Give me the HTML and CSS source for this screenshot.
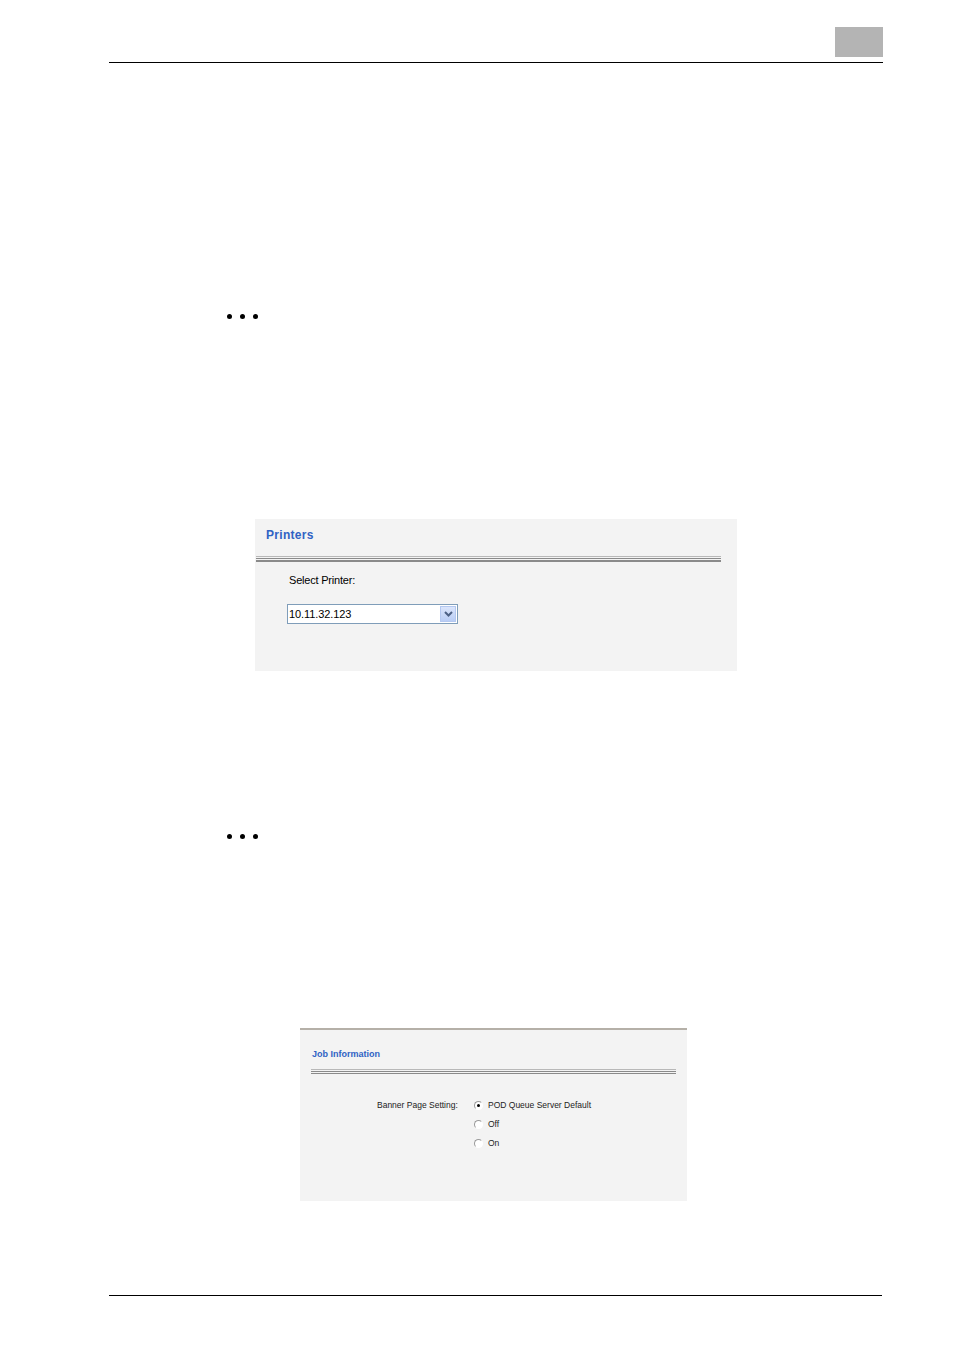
FILE: index.html
```html
<!DOCTYPE html>
<html lang="en">
<head>
  <meta charset="UTF-8">
  <title>Printer settings</title>
  <link rel="stylesheet" href="styles.css">
</head>
<body>
  <div class="page">
    <header class="top">
      <div class="tab"></div>
    </header>

    <!-- step marker -->
    <div class="dots dots-first"><span></span><span></span><span></span></div>

    <!-- Printers panel -->
    <section class="panel printers">
      <h2 class="panel-title">Printers</h2>
      <div class="double-rule"></div>
      <div class="printers-body">
        <p class="field-label">Select Printer:</p>
        <div class="select">
          <span class="select-value">10.11.32.123</span>
          <span class="select-btn">
            <svg width="9" height="6" viewBox="0 0 9 6"><path d="M1 1 L4.5 4.5 L8 1" fill="none" stroke="#4d6185" stroke-width="2"/></svg>
          </span>
        </div>
      </div>
    </section>

    <div class="dots dots-second"><span></span><span></span><span></span></div>

    <!-- Job information panel -->
    <section class="panel job">
      <h2 class="panel-title small">Job Information</h2>
      <div class="double-rule"></div>
      <div class="job-body">
        <span class="job-label">Banner Page Setting:</span>
        <ul class="radios">
          <li><span class="radio checked"></span>POD Queue Server Default</li>
          <li><span class="radio"></span>Off</li>
          <li><span class="radio"></span>On</li>
        </ul>
      </div>
    </section>

    <footer class="bottom"></footer>
  </div>
</body>
</html>
```

FILE: styles.css
```css
* {
  margin: 0;
  padding: 0;
  box-sizing: border-box;
}
body {
  font-family: 'Liberation Sans', Arial, sans-serif;
  background: #fff;
  color: #000;
}
.page {
  width: 954px;
  height: 1351px;
}
/* Шапка */
.top {
  margin-left: 109px;
  width: 774px;
  padding-top: 27px;
  padding-bottom: 5px;
  display: flex;
  justify-content: flex-end;
  border-bottom: 1px solid #000;
}
.tab {
  width: 48px;
  height: 30px;
  background: #b4b4b4;
}
/* Маркери кроків */
.dots {
  display: flex;
  gap: 8px;
  margin-left: 227px;
}
.dots span {
  width: 5px;
  height: 5px;
  border-radius: 50%;
  background: #000;
}
.dots-first {
  margin-top: 251px;
}
.dots-second {
  margin-top: 163px;
}
/* Панелі */
.panel {
  background: #f3f3f3;
}
.printers {
  margin-top: 200px;
  margin-left: 255px;
  width: 482px;
  height: 152px;
  padding-top: 9px;
}
.panel-title {
  color: #2f62c4;
  font-size: 12px;
  font-weight: bold;
  letter-spacing: 0.3px;
  margin-left: 11px;
  line-height: 14px;
}
.double-rule {
  height: 6px;
  border-top: 1px solid #b8b8b8;
  border-bottom: 2px solid #8a8a8a;
  position: relative;
}
.double-rule::before {
  content: "";
  position: absolute;
  left: 0;
  right: 0;
  top: 1px;
  height: 1px;
  background: #8a8a8a;
}
.printers .double-rule {
  margin-top: 14px;
  margin-left: 1px;
  width: 465px;
}
.printers-body {
  padding-left: 32px;
}
.field-label {
  font-size: 11px;
  letter-spacing: -0.2px;
  line-height: 14px;
  margin-top: 11px;
  margin-left: 2px;
}
.select {
  margin-top: 17px;
  width: 171px;
  height: 20px;
  border: 1px solid #7f9db9;
  background: #fff;
  display: flex;
  align-items: center;
  justify-content: space-between;
  padding-left: 1px;
}
.select-value {
  font-size: 11px;
  letter-spacing: -0.1px;
}
.select-btn {
  width: 16px;
  height: 16px;
  margin-right: 1px;
  background: linear-gradient(#dbe5fb, #b9cdf5);
  border: 1px solid #b4c8f0;
  display: flex;
  align-items: center;
  justify-content: center;
}
.job {
  margin-top: 189px;
  margin-left: 300px;
  width: 387px;
  height: 173px;
  border-top: 2px solid #b5b0a8;
  padding-top: 18px;
}
.panel-title.small {
  font-size: 9px;
  letter-spacing: 0;
  margin-left: 12px;
  line-height: 12px;
}
.job .double-rule {
  margin-top: 9px;
  margin-left: 11px;
  width: 365px;
  height: 5px;
  border-bottom-width: 1px;
}
.job-body {
  display: flex;
  margin-top: 25px;
  margin-left: 77px;
  font-size: 8.5px;
  color: #222;
}
.job-label {
  width: 97px;
  line-height: 12px;
}
.radios {
  list-style: none;
  display: flex;
  flex-direction: column;
  gap: 7px;
}
.radios li {
  display: flex;
  align-items: center;
  line-height: 12px;
}
.radio {
  width: 9px;
  height: 9px;
  border-radius: 50%;
  border: 1px solid #9a9a9a;
  border-right-color: #fff;
  border-bottom-color: #fff;
  background: #fff;
  margin-right: 5px;
  position: relative;
}
.radio.checked::after {
  content: "";
  position: absolute;
  left: 2px;
  top: 2px;
  width: 3px;
  height: 3px;
  border-radius: 50%;
  background: #000;
}
.bottom {
  margin-top: 94px;
  margin-left: 109px;
  width: 773px;
  border-top: 1px solid #000;
}
```
